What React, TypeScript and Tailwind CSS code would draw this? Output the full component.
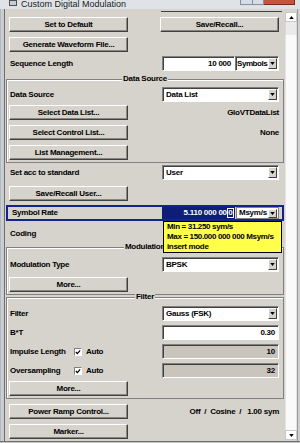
import React from "react";

const FONT = "font-['Liberation_Sans',Arial,sans-serif]";

function Btn({ children }: { children: React.ReactNode }) {
  return (
    <div className="flex h-[15px] w-[119px] items-center justify-center border border-t-white border-l-white border-b-[#404040] border-r-[#404040] bg-[#d6d3cc] text-[8px] font-bold text-black shadow-[inset_-1px_-1px_0_#8a8780]">
      {children}
    </div>
  );
}

function Arrow({ up }: { up?: boolean }) {
  return (
    <svg viewBox="0 0 6 4" className="h-[3px] w-[5px]">
      <path d={up ? "M0 4L3 0L6 4Z" : "M0 0L6 0L3 4Z"} fill="#000" />
    </svg>
  );
}

function Select({ value, w = "w-[117px]", pl = "pl-[3px]" }: { value: string; w?: string; pl?: string }) {
  return (
    <div className={`flex h-[15px] ${w} items-center border border-t-[#808080] border-l-[#808080] border-b-white border-r-white bg-white shadow-[inset_1px_1px_0_#404040]`}>
      <span className={`flex-1 overflow-hidden whitespace-nowrap ${pl} text-[8px] font-bold`}>{value}</span>
      <div className="mr-[1px] flex h-[11px] w-[9px] shrink-0 items-center justify-center border border-t-white border-l-white border-b-[#404040] border-r-[#404040] bg-[#d6d3cc]">
        <Arrow />
      </div>
    </div>
  );
}

function Input({ value, gray, w = "w-[117px]" }: { value: string; gray?: boolean; w?: string }) {
  return (
    <div
      className={`flex h-[15px] ${w} items-center justify-end border border-t-[#808080] border-l-[#808080] border-b-white border-r-white pr-[3px] text-[8px] font-bold shadow-[inset_1px_1px_0_#404040] ${
        gray ? "bg-[#c9c5bd]" : "bg-white"
      }`}
    >
      {value}
    </div>
  );
}

function Label({ children }: { children: React.ReactNode }) {
  return <span className="pl-[1px] text-[8px] font-bold">{children}</span>;
}

function Row({ children, className = "" }: { children: React.ReactNode; className?: string }) {
  return <div className={`flex h-[15px] items-center justify-between ${className}`}>{children}</div>;
}

function Group({ title, children, className = "" }: { title: string; children: React.ReactNode; className?: string }) {
  return (
    <div className={`relative mx-[1px] border border-[#808080] pl-[2px] pr-[4px] shadow-[inset_1px_1px_0_#fff] ${className}`}>
      <span className="absolute -top-[6px] left-1/2 -translate-x-1/2 bg-[#d6d3cc] px-[1px] text-[8px] font-bold leading-[10px]">
        {title}
      </span>
      {children}
    </div>
  );
}

function Check() {
  return (
    <div className="flex h-[8px] w-[8px] items-center justify-center border border-t-[#808080] border-l-[#808080] border-b-white border-r-white bg-white">
      <svg viewBox="0 0 7 7" className="h-[6px] w-[6px]">
        <path d="M1 3.5L2.8 5.3L6 1.5" stroke="#000" strokeWidth="1.4" fill="none" />
      </svg>
    </div>
  );
}

export default function App() {
  return (
    <div className={`${FONT} relative flex h-[443px] w-[300px] flex-col overflow-hidden bg-[#d6d3cc] tracking-[-0.25px] text-black`}>
      {/* title bar */}
      <div className="flex h-[9px] items-start bg-[#dfe3e8]">
        <div className="ml-[9px] h-[6px] w-[8px] border border-[#505050] bg-[#c8ccd4]" />
        <span className="-mt-[1px] ml-[4px] text-[9px] leading-[10px] tracking-normal text-[#1a1a1a]">Custom Digital Modulation</span>
        <div className="ml-auto flex h-[5px]">
          <div className="w-[13px] border border-t-0 border-[#8a9099] bg-[#d7dde6]" />
          <div className="w-[11px] border border-l-0 border-t-0 border-[#8a9099] bg-[#d7dde6]" />
          <div className="w-[31px] border border-l-0 border-t-0 border-[#7a2a1e] bg-[#c9533d]" />
          <div className="w-[5px]" />
        </div>
      </div>

      {/* window body */}
      <div className="flex flex-1">
        <div className="w-[5px] border-r border-[#6f6f6f] bg-[linear-gradient(90deg,#aab8cc_0,#aab8cc_1px,#d3d3d3_1px,#c6c6c6_4px)]" />

        <div className="relative flex w-[280px] flex-col pl-[4px] pr-[6px]">
          {/* scrolled-off row remnant */}
          <div className="flex h-[3px] justify-end">
            <div className="-mr-[3px] w-[121px] border-b border-[#404040]" />
          </div>

          <Row className="mt-[5px]">
            <Btn>Set to Default</Btn>
            <Btn>Save/Recall...</Btn>
          </Row>
          <Row className="mt-[5px]">
            <Btn>Generate Waveform File...</Btn>
          </Row>
          <Row className="mt-[4px]">
            <Label>Sequence Length</Label>
            <div className="flex">
              <Input value="10 000" w="w-[73px]" />
              <div className="tracking-[-0.45px]">
                <Select value="Symbols" w="w-[44px]" pl="pl-[1px]" />
              </div>
            </div>
          </Row>

          <Group title="Data Source" className="-ml-[3px] -mr-[5px] mt-[8px] pb-[2px] pt-[7px]">
            <Row>
              <Label>Data Source</Label>
              <Select value="Data List" />
            </Row>
            <Row className="mt-[3px]">
              <Btn>Select Data List...</Btn>
              <span className="text-[8px] font-bold">GloVTDataList</span>
            </Row>
            <Row className="mt-[5px]">
              <Btn>Select Control List...</Btn>
              <span className="text-[8px] font-bold">None</span>
            </Row>
            <Row className="mt-[5px]">
              <Btn>List Management...</Btn>
            </Row>
          </Group>

          <Row className="mt-[2px]">
            <Label>Set acc to standard</Label>
            <Select value="User" />
          </Row>
          <Row className="mt-[6px]">
            <Btn>Save/Recall User...</Btn>
          </Row>

          <div className="-ml-[3px] -mr-[5px] mt-[4px] flex h-[16px] items-center justify-between border-2 border-[#13238a] pl-[3px] pr-[3px]">
            <Label>Symbol Rate</Label>
            <div className="flex h-[12px]">
              <div className="flex w-[73px] items-center justify-end bg-[#0c1e78] pr-[1px] text-[8px] font-bold text-white">
                5.110 000 00<span className="border border-white px-[0.5px] leading-[8px]">0</span>
              </div>
              <div className="ml-[1px] flex w-[43px] items-center border border-[#808080] bg-white">
                <span className="flex-1 whitespace-nowrap pl-[2px] text-[8px] font-bold">Msym/s</span>
                <div className="mr-[1px] flex h-[9px] w-[9px] shrink-0 items-center justify-center border border-t-white border-l-white border-b-[#404040] border-r-[#404040] bg-[#d6d3cc]">
                  <Arrow />
                </div>
              </div>
            </div>
          </div>

          <Row className="mt-[5px]">
            <Label>Coding</Label>
          </Row>

          <Group title="Modulation" className="-ml-[3px] -mr-[5px] mt-[6px] pb-[2px] pt-[9px]">
            <Row>
              <Label>Modulation Type</Label>
              <Select value="BPSK" />
            </Row>
            <Row className="mt-[5px]">
              <Btn>More...</Btn>
            </Row>
          </Group>

          <Group title="Filter" className="-ml-[3px] -mr-[5px] mt-[2px] pb-[2px] pt-[8px]">
            <Row>
              <Label>Filter</Label>
              <Select value="Gauss (FSK)" />
            </Row>
            <Row className="mt-[4px]">
              <Label>B*T</Label>
              <Input value="0.30" />
            </Row>
            <Row className="mt-[4px]">
              <div className="flex items-center">
                <span className="w-[65px] pl-[1px] text-[8px] font-bold">Impulse Length</span>
                <Check />
                <span className="ml-[4px] text-[8px] font-bold">Auto</span>
              </div>
              <Input value="10" gray />
            </Row>
            <Row className="mt-[4px]">
              <div className="flex items-center">
                <span className="w-[65px] pl-[1px] text-[8px] font-bold">Oversampling</span>
                <Check />
                <span className="ml-[4px] text-[8px] font-bold">Auto</span>
              </div>
              <Input value="32" gray />
            </Row>
            <Row className="mt-[3px]">
              <Btn>More...</Btn>
            </Row>
          </Group>

          <Row className="mt-[5px]">
            <Btn>Power Ramp Control...</Btn>
            <span className="whitespace-pre text-[8px] font-bold">{"Off  /  Cosine  /   1.00 sym"}</span>
          </Row>
          <Row className="mt-[5px]">
            <Btn>Marker...</Btn>
          </Row>

          {/* tooltip */}
          <div className="absolute left-[158px] top-[212px] flex h-[32px] w-[119px] flex-col justify-center whitespace-nowrap border border-black bg-[#ffff4a] pl-[3px] text-[8px] font-bold leading-[10px] tracking-[-0.35px]">
            <span>Min = 31.250 sym/s</span>
            <span>Max = 150.000 000 000 Msym/s</span>
            <span>insert mode</span>
          </div>
        </div>

        {/* scrollbar */}
        <div className="flex w-[12px] flex-col pb-[1px] pt-[3px]">
          <div className="flex h-[10px] items-center justify-center border border-[#c8c8c8] bg-white">
            <Arrow up />
          </div>
          <div className="h-[13px] border-x border-[#d8d8d8] bg-[#eaeaea]" />
          <div className="flex-1 border-x border-[#e4e4e4] bg-[#fafafa]" />
          <div className="flex h-[10px] items-center justify-center border border-[#c8c8c8] bg-white">
            <Arrow />
          </div>
        </div>
        <div className="w-[3px] border-l border-[#9a9a9a] bg-[#cfcfcf]" />
      </div>
      <div className="h-[2px] border-t border-[#6f6f6f] bg-[#c6c6c6]" />
    </div>
  );
}
